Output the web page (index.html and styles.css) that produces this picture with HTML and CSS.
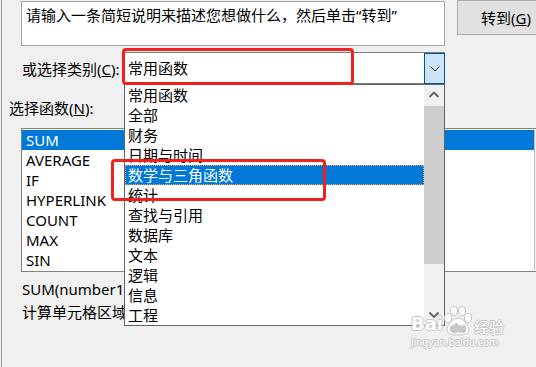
FILE: index.html
```html
<!DOCTYPE html>
<html lang="zh-CN">

<head>
    <meta charset="UTF-8">
    <title>插入函数</title>
    <link rel="stylesheet" href="styles.css">
</head>

<body>
    <div class="screen">
        <div class="dialog">
            <div class="search-row">
                <div class="search-box">请输入一条简短说明来描述您想做什么，然后单击“转到”</div>
                <button class="btn">转到(<u>G</u>)</button>
            </div>

            <div class="category-row">
                <span class="label">或选择类别(<u>C</u>):</span>
                <div class="combo">
                    <span class="combo-value">常用函数</span>
                    <span class="combo-arrow">
                        <svg width="10" height="6" viewBox="0 0 10 6"><path d="M0.5 0.5 L5 5 L9.5 0.5" fill="none" stroke="#3c3c3c" stroke-width="1"/></svg>
                    </span>
                </div>
            </div>

            <div class="fn-label">选择函数(<u>N</u>):</div>

            <div class="fn-list">
                <div class="fn-items">
                    <div class="fn-item selected">SUM</div>
                    <div class="fn-item">AVERAGE</div>
                    <div class="fn-item">IF</div>
                    <div class="fn-item">HYPERLINK</div>
                    <div class="fn-item">COUNT</div>
                    <div class="fn-item">MAX</div>
                    <div class="fn-item">SIN</div>
                </div>
                <div class="fn-scroll"></div>
            </div>

            <!-- the rest of these two lines sits under the open dropdown -->
            <div class="fn-sig">SUM(number1</div>
            <div class="fn-desc">计算单元格区域</div>
        </div>

        <!-- open category list, drawn over the dialog -->
        <div class="dropdown">
            <div class="dd-items">
                <div class="dd-item">常用函数</div>
                <div class="dd-item">全部</div>
                <div class="dd-item">财务</div>
                <div class="dd-item">日期与时间</div>
                <div class="dd-item selected">数学与三角函数</div>
                <div class="dd-item">统计</div>
                <div class="dd-item">查找与引用</div>
                <div class="dd-item">数据库</div>
                <div class="dd-item">文本</div>
                <div class="dd-item">逻辑</div>
                <div class="dd-item">信息</div>
                <div class="dd-item">工程</div>
            </div>
            <div class="scrollbar">
                <div class="sb-btn">
                    <svg width="20" height="20" viewBox="0 0 20 20"><path d="M5.5 12 L10 7.5 L14.5 12" fill="none" stroke="#606060" stroke-width="1.8"/></svg>
                </div>
                <div class="sb-track"><div class="sb-thumb"></div></div>
                <div class="sb-btn">
                    <svg width="20" height="20" viewBox="0 0 20 20"><path d="M5.5 7.5 L10 12 L14.5 7.5" fill="none" stroke="#606060" stroke-width="1.8"/></svg>
                </div>
            </div>
        </div>

        <!-- red annotation boxes -->
        <div class="mark mark-combo"></div>
        <div class="mark mark-item"></div>

        <div class="watermark">
            <div class="wm-top">
                <span class="wm-bai">Bai</span>
                <svg class="wm-paw" width="30" height="30" viewBox="0 0 30 30">
                    <g fill="#fff" stroke="#c4c4c4" stroke-width="1">
                        <ellipse cx="5" cy="12" rx="3.5" ry="4.5"/>
                        <ellipse cx="11" cy="5" rx="3.5" ry="4.5"/>
                        <ellipse cx="19" cy="5" rx="3.5" ry="4.5"/>
                        <ellipse cx="25" cy="12" rx="3.5" ry="4.5"/>
                        <path d="M15 12 C9 12 4 20 4 24 C4 28 8 29 15 29 C22 29 26 28 26 24 C26 20 21 12 15 12 Z"/>
                    </g>
                    <text x="15" y="26" text-anchor="middle" class="wm-du">du</text>
                </svg>
                <span class="wm-jy">经验</span>
            </div>
            <div class="wm-url">jingyan.baidu.com</div>
        </div>
    </div>
</body>

</html>
```

FILE: styles.css
```css
html,
body {
    margin: 0;
    padding: 0;
}

body {
    background-color: #f0f0f0;
    font-family: "Noto Sans", "Noto Sans CJK SC", sans-serif;
    font-size: 15px;
    color: #000;
}

.screen {
    position: relative;
    width: 536px;
    height: 367px;
    overflow: hidden;
}

.dialog {
    margin-left: 1px;
    border-left: 1px solid #9c9c9c;
    height: 367px;
}

/* search row */
.search-row {
    display: flex;
    align-items: flex-start;
    padding-left: 19px;
    width: 600px;
}

.search-box {
    box-sizing: border-box;
    flex: 0 0 424px;
    height: 45px;
    margin-top: 1px;
    border: 1px solid #a3a3a3;
    background-color: #fff;
    padding: 3px 4px;
    line-height: 20px;
    white-space: nowrap;
}

.btn {
    box-sizing: border-box;
    flex: 0 0 98px;
    width: 98px;
    height: 35px;
    margin-left: 12px;
    border: 1px solid #adadad;
    background-color: #e1e1e1;
    font-family: inherit;
    font-size: 15px;
    color: #000;
    padding: 0;
    text-align: center;
}

/* category row */
.category-row {
    display: flex;
    align-items: center;
    margin-top: 6px;
    padding-left: 20px;
}

.label {
    width: 101px;
    white-space: nowrap;
}

.combo {
    box-sizing: border-box;
    display: flex;
    width: 322px;
    height: 32px;
    border: 1px solid #7a7a7a;
    background-color: #fff;
}

.combo-value {
    flex: 1;
    padding-left: 4px;
    line-height: 30px;
}

.combo-arrow {
    box-sizing: border-box;
    display: flex;
    align-items: center;
    justify-content: center;
    width: 21px;
    margin: 0 -1px -1px 0;
    border: 1px solid #005499;
    background-color: #cce4f7;
}

/* function list */
.fn-label {
    margin-top: 14px;
    padding-left: 7px;
    line-height: 20px;
}

.fn-list {
    box-sizing: border-box;
    display: flex;
    width: 540px;
    height: 144px;
    margin-top: 10px;
    margin-left: 19px;
    border: 1px solid #828282;
    padding: 1px 0;
    background-color: #fff;
}

.fn-items {
    flex: 0 0 512px;
}

.fn-item {
    height: 20px;
    line-height: 20px;
    padding-left: 4px;
}

.fn-item.selected {
    background-color: #0078d7;
    color: #fff;
}

.fn-scroll {
    flex: 1;
    border-left: 1px solid #bdbdbd;
    background-color: #f0f0f0;
}

.fn-sig {
    margin-top: 7px;
    padding-left: 20px;
    line-height: 20px;
    white-space: nowrap;
}

.fn-desc {
    margin-top: 3px;
    padding-left: 20px;
    line-height: 20px;
    white-space: nowrap;
}

/* dropdown */
.dropdown {
    position: absolute;
    left: 124px;
    top: 84px;
    box-sizing: border-box;
    display: flex;
    width: 321px;
    height: 242px;
    border: 1px solid #646464;
    background-color: #fff;
}

.dd-items {
    flex: 1;
}

.dd-item {
    height: 20px;
    line-height: 20px;
    padding-left: 3px;
    white-space: nowrap;
}

.dd-item.selected {
    background-color: #0078d7;
    color: #fff;
    outline: 1px dotted #f4a55c;
    outline-offset: -1px;
}

.scrollbar {
    display: flex;
    flex-direction: column;
    width: 20px;
    background-color: #f0f0f0;
}

.sb-btn {
    height: 20px;
}

.sb-btn svg {
    display: block;
}

.sb-track {
    flex: 1;
    padding-top: 1px;
}

.sb-thumb {
    height: 158px;
    background-color: #cdcdcd;
}

/* annotations */
.mark {
    position: absolute;
    box-sizing: border-box;
    border: 3px solid #f0201c;
    border-radius: 4px;
}

.mark-combo {
    left: 122px;
    top: 48px;
    width: 232px;
    height: 37px;
}

.mark-item {
    left: 111px;
    top: 159px;
    width: 215px;
    height: 42px;
}

/* watermark */
.watermark {
    position: absolute;
    left: 411px;
    top: 306px;
    color: #fff;
    text-shadow: 1px 0 0 #c6c6c6, -1px 0 0 #c6c6c6, 0 1px 0 #c6c6c6, 0 -1px 0 #c6c6c6;
}

.wm-top {
    display: flex;
    align-items: flex-end;
}

.wm-bai {
    font-family: "DejaVu Sans", sans-serif;
    font-weight: bold;
    font-size: 18px;
    line-height: 18px;
    margin-bottom: 11px;
}

.wm-paw {
    display: block;
    margin-bottom: 8px;
}

.wm-du {
    font-family: "DejaVu Sans", sans-serif;
    font-weight: bold;
    font-size: 11px;
    fill: #c6c6c6;
}

.wm-jy {
    font-family: "Noto Sans CJK SC", sans-serif;
    font-size: 15px;
    line-height: 15px;
    margin-bottom: 10px;
    margin-left: 1px;
}

.wm-url {
    margin-top: -7px;
    font-family: "DejaVu Sans", sans-serif;
    font-size: 10px;
    line-height: 12px;
    letter-spacing: -0.3px;
}
```
